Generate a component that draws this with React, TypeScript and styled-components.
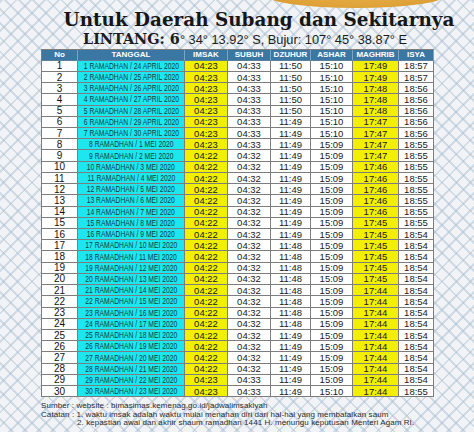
import React from 'react';
import styled, { createGlobalStyle } from 'styled-components';

const GlobalStyle = createGlobalStyle`
  html, body {
    margin: 0;
    padding: 0;
  }
  body {
    background: #f0f2f5;
    font-family: "Liberation Sans", Arial, sans-serif;
  }
`;

const Page = styled.div`
  position: relative;
  width: 474px;
  height: 432px;
  overflow: hidden;
  box-sizing: border-box;
  padding-top: 9px;
  display: flex;
  flex-direction: column;
  align-items: flex-start;
  background-color: #f1f3f6;
  background-image: repeating-linear-gradient(
      45deg,
      transparent 0 8px,
      rgba(160, 184, 204, 0.42) 8px 10px
    ),
    repeating-linear-gradient(
      -45deg,
      transparent 0 8px,
      rgba(160, 184, 204, 0.42) 8px 10px
    );
`;

const OrangeCap = styled.div`
  position: absolute;
  top: -18px;
  left: 266px;
  width: 180px;
  height: 26px;
  border-radius: 50%;
  background: radial-gradient(ellipse at 50% 30%, #e9b24a 0%, #d99a30 100%);
`;

const Title = styled.h1`
  margin: 0;
  width: 100%;
  box-sizing: border-box;
  padding-left: 44px;
  text-align: center;
  font-family: "DejaVu Serif", "Liberation Serif", serif;
  font-weight: bold;
  font-size: 18.4px;
  line-height: 22px;
  color: #161616;
`;

const Coords = styled.div`
  width: 100%;
  box-sizing: border-box;
  padding-left: 16px;
  text-align: center;
  font-size: 12.8px;
  line-height: 16.5px;
  color: #1c1c1c;
  white-space: nowrap;
`;

const CoordsLabel = styled.span`
  font-family: "DejaVu Serif", "Liberation Serif", serif;
  font-weight: bold;
  font-size: 14.4px;
`;

const Schedule = styled.div`
  margin: 0 0 0 41px;
  display: grid;
  grid-template-columns: 36px 107px 43px 43px 40px 42px 46px 35px;
  grid-auto-rows: 11.22px;
  border-top: 1px solid #7d7d7d;
  border-left: 1px solid #7d7d7d;
  background: #ffffff;
`;

const HeadCell = styled.div`
  display: flex;
  align-items: center;
  justify-content: center;
  box-sizing: border-box;
  background: #3b77a3;
  border-right: 1px solid #7fa4c2;
  border-bottom: 1px solid #5c7f9c;
  color: #ffffff;
  font-weight: bold;
  font-size: 8px;
  white-space: nowrap;
`;

type Tone = 'plain' | 'cyan' | 'yellow';

const toneBg: Record<Tone, string> = {
  plain: '#ffffff',
  cyan: '#1ee6ef',
  yellow: '#f3ef00',
};

const Cell = styled.div<{ $tone: Tone }>`
  display: flex;
  align-items: center;
  justify-content: center;
  box-sizing: border-box;
  overflow: visible;
  background: ${(p) => toneBg[p.$tone]};
  border-right: 1px solid #7d7d7d;
  border-bottom: 1px solid #7d7d7d;
  color: #202020;
  font-size: 9.5px;
  white-space: nowrap;
`;

const NoCell = styled(Cell)`
  font-size: 10px;
  color: #111;
`;

const DateText = styled.span`
  display: inline-block;
  font-size: 9px;
  color: #0d3f44;
  transform: scaleX(0.75);
`;

const Footer = styled.div`
  margin: 5px 0 0 41px;
  font-size: 8px;
  line-height: 8.6px;
  color: #2b2b2b;
  white-space: nowrap;
`;

const FootLine = styled.div<{ $indent?: boolean }>`
  padding-left: ${(p) => (p.$indent ? '36px' : '0')};
  letter-spacing: 0.08px;
`;

const headers = ['No', 'TANGGAL', 'IMSAK', 'SUBUH', 'DZUHUR', 'ASHAR', 'MAGHRIB', 'ISYA'];

// [tanggal, imsak, subuh, dzuhur, ashar, maghrib, isya]
const rows: string[][] = [
  ['24 APRIL', '04:23', '04:33', '11:50', '15:10', '17:49', '18:57'],
  ['25 APRIL', '04:23', '04:33', '11:50', '15:10', '17:49', '18:57'],
  ['26 APRIL', '04:23', '04:33', '11:50', '15:10', '17:48', '18:56'],
  ['27 APRIL', '04:23', '04:33', '11:50', '15:10', '17:48', '18:56'],
  ['28 APRIL', '04:23', '04:33', '11:50', '15:10', '17:48', '18:56'],
  ['29 APRIL', '04:23', '04:33', '11:49', '15:10', '17:47', '18:56'],
  ['30 APRIL', '04:23', '04:33', '11:49', '15:10', '17:47', '18:56'],
  ['1 MEI', '04:23', '04:33', '11:49', '15:09', '17:47', '18:55'],
  ['2 MEI', '04:22', '04:32', '11:49', '15:09', '17:47', '18:55'],
  ['3 MEI', '04:22', '04:32', '11:49', '15:09', '17:46', '18:55'],
  ['4 MEI', '04:22', '04:32', '11:49', '15:09', '17:46', '18:55'],
  ['5 MEI', '04:22', '04:32', '11:49', '15:09', '17:46', '18:55'],
  ['6 MEI', '04:22', '04:32', '11:49', '15:09', '17:46', '18:55'],
  ['7 MEI', '04:22', '04:32', '11:49', '15:09', '17:46', '18:55'],
  ['8 MEI', '04:22', '04:32', '11:49', '15:09', '17:45', '18:55'],
  ['9 MEI', '04:22', '04:32', '11:49', '15:09', '17:45', '18:54'],
  ['10 MEI', '04:22', '04:32', '11:48', '15:09', '17:45', '18:54'],
  ['11 MEI', '04:22', '04:32', '11:48', '15:09', '17:45', '18:54'],
  ['12 MEI', '04:22', '04:32', '11:48', '15:09', '17:45', '18:54'],
  ['13 MEI', '04:22', '04:32', '11:48', '15:09', '17:45', '18:54'],
  ['14 MEI', '04:22', '04:32', '11:48', '15:09', '17:44', '18:54'],
  ['15 MEI', '04:22', '04:32', '11:48', '15:09', '17:44', '18:54'],
  ['16 MEI', '04:22', '04:32', '11:48', '15:09', '17:44', '18:54'],
  ['17 MEI', '04:22', '04:32', '11:48', '15:09', '17:44', '18:54'],
  ['18 MEI', '04:22', '04:32', '11:49', '15:09', '17:44', '18:54'],
  ['19 MEI', '04:22', '04:32', '11:49', '15:09', '17:44', '18:54'],
  ['20 MEI', '04:22', '04:32', '11:49', '15:09', '17:44', '18:54'],
  ['21 MEI', '04:22', '04:32', '11:49', '15:09', '17:44', '18:54'],
  ['22 MEI', '04:23', '04:33', '11:49', '15:09', '17:44', '18:54'],
  ['23 MEI', '04:23', '04:33', '11:49', '15:10', '17:44', '18:55'],
];

const timeTones: Tone[] = ['yellow', 'plain', 'plain', 'plain', 'yellow', 'plain'];

const App = () => {
  return (
    <>
      <GlobalStyle />
      <Page>
        <OrangeCap />
        <Title>Untuk Daerah Subang dan Sekitarnya</Title>
        <Coords>
          <CoordsLabel>LINTANG: 6</CoordsLabel>° 34° 13.92° S, Bujur: 107° 45° 38.87° E
        </Coords>
        <Schedule>
          {headers.map((h) => (
            <HeadCell key={h}>{h}</HeadCell>
          ))}
          {rows.map((r, i) => (
            <React.Fragment key={i}>
              <NoCell $tone="plain">{i + 1}</NoCell>
              <Cell $tone="cyan">
                <DateText>
                  {i + 1} RAMADHAN / {r[0]} 2020
                </DateText>
              </Cell>
              {r.slice(1).map((t, j) => (
                <Cell key={j} $tone={timeTones[j]}>
                  {t}
                </Cell>
              ))}
            </React.Fragment>
          ))}
        </Schedule>
        <Footer>
          <FootLine>Sumber : website : bimasimas.kemenag.go.id/jadwalimsakiyah</FootLine>
          <FootLine>
            Catatan : 1. waktu imsak adalah waktu mulai menahan diri dari hal-hal yang membatalkan saum
          </FootLine>
          <FootLine $indent>
            2. kepastian awal dan akhir shaum ramadhan 1441 H. menungu keputusan Menteri Agam RI.
          </FootLine>
        </Footer>
      </Page>
    </>
  );
};

export default App;
